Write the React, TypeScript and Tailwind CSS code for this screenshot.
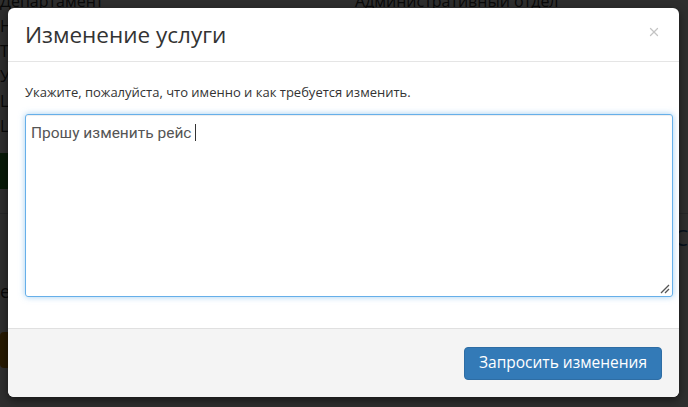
import { X } from "lucide-react";

const rows = [
  { label: "Департамент", value: "Административный отдел" },
  { label: "Н", value: "" },
  { label: "Т", value: "" },
  { label: "У", value: "" },
  { label: "Ц", value: "" },
  { label: "L", value: "" },
];

function Page() {
  return (
    <div className="flex flex-col w-full h-full bg-white text-[#333]" style={{ fontFamily: "'Open Sans', sans-serif" }}>
      <div className="flex flex-col -mt-[12px]">
        {rows.map((r) => (
          <div key={r.label} className="flex h-[25px] items-center text-[16px] leading-[20px]">
            <span className="w-[355px]">{r.label}</span>
            <span>{r.value}</span>
          </div>
        ))}
      </div>
      <div className="mt-[15px] h-[36px] w-[120px] bg-[#2e8b2e]" />
      <div className="mt-[24px] border-t border-gray-300" />
      <div className="mt-[10px] flex justify-end text-[22px] leading-[26px] text-[#1a5a9a]">C</div>
      <div className="mt-[30px] text-[18px] leading-[22px]">e</div>
      <div className="mt-[30px] h-[36px] w-[100px] rounded bg-[#d08a10]" />
    </div>
  );
}

export default function App() {
  return (
    <div className="relative w-[688px] h-[407px] overflow-hidden">
      <Page />
      <div className="absolute inset-0 bg-black/[0.82] p-[8px] pr-[9px]">
        <div
          className="flex flex-col w-[671px] h-[389px] bg-white rounded-[6px] overflow-hidden shadow-[0_3px_9px_rgba(0,0,0,0.5)]"
          style={{ fontFamily: "'Open Sans', sans-serif" }}
        >
          <div className="flex items-center justify-between h-[54px] px-[17px] border-b border-[#e5e5e5]">
            <h4 className="text-[22.5px] leading-none text-[#333] mt-[1px]">Изменение услуги</h4>
            <X size={14} strokeWidth={2.2} className="text-[#c4c4c4] mr-[1px] -mt-[6px]" />
          </div>
          <div className="flex flex-col flex-1 pl-[17px] pr-[6px] pt-[22px]">
            <p className="text-[13px] leading-[16px] text-[#333]">
              Укажите, пожалуйста, что именно и как требуется изменить.
            </p>
            <div className="relative mt-[14px] h-[183px] w-[648px] rounded-[3px] border border-[#66afe9] shadow-[inset_0_1px_1px_rgba(0,0,0,0.075),0_0_6px_rgba(102,175,233,0.6)] px-[5px] py-[5px]">
              <span className="text-[15.5px] leading-[18px] text-[#555]" style={{ fontFamily: "Roboto, 'Liberation Sans', sans-serif" }}>
                Прошу изменить рейс
              </span>
              <span className="inline-block align-middle ml-[4px] -mt-[3px] w-px h-[17px] bg-[#333]" />
              <svg className="absolute right-[2px] bottom-[2px]" width="11" height="11" viewBox="0 0 11 11">
                <path d="M10 2 L2 10 M10 6 L6 10" stroke="#555" strokeWidth="1.3" />
              </svg>
            </div>
          </div>
          <div className="flex items-center justify-end h-[69px] bg-[#f4f4f4] border-t border-[#e0e0e0] pr-[17px]">
            <button className="h-[33px] px-[14px] rounded-[4px] bg-[#337ab7] border border-[#2e6da4] text-white text-[15.5px]">
              Запросить изменения
            </button>
          </div>
        </div>
      </div>
    </div>
  );
}
